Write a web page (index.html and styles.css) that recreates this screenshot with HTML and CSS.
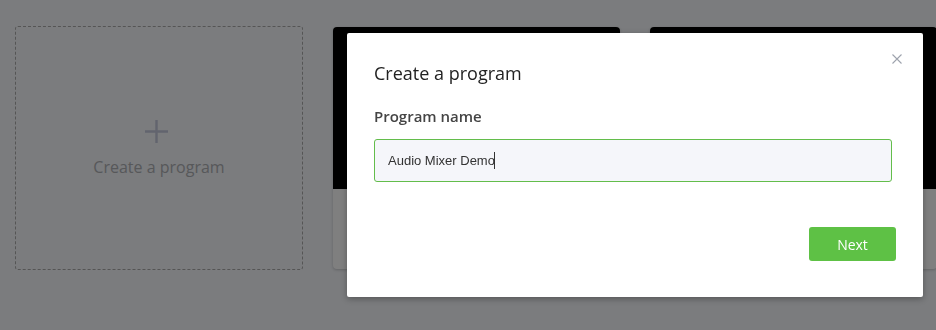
FILE: index.html
```html
<!DOCTYPE html>
<html lang="en">
<head>
  <meta charset="UTF-8">
  <title>Programs</title>
  <link rel="stylesheet" href="styles.css">
</head>
<body>
  <div class="programs">
    <div class="new-card">
      <svg class="plus" width="25" height="25" viewBox="0 0 25 25">
        <path d="M12.5 1v23M1 12.5h23" stroke="currentColor" stroke-width="2.4" fill="none"/>
      </svg>
      <div class="new-label">Create a program</div>
    </div>
    <div class="card">
      <div class="card-thumb"></div>
      <div class="card-body"></div>
    </div>
    <div class="card">
      <div class="card-thumb"></div>
      <div class="card-body"></div>
    </div>
  </div>

  <div class="overlay"></div>

  <div class="modal">
    <button class="close" aria-label="Close">
      <svg width="10" height="10" viewBox="0 0 10 10">
        <path d="M0.5 0.5l9 9M9.5 0.5l-9 9" stroke="currentColor" stroke-width="1.1" fill="none"/>
      </svg>
    </button>
    <h2>Create a program</h2>
    <label for="programName">Program name</label>
    <div class="field">
      <input type="text" id="programName" value="Audio Mixer Demo">
      <span class="caret"></span>
    </div>
    <div class="actions">
      <button class="next">Next</button>
    </div>
  </div>
</body>
</html>
```

FILE: styles.css
```css
body {
  margin: 0;
  font-family: 'Open Sans', sans-serif;
  background-color: #f6f8fc;
  color: #333;
  overflow: hidden;
  height: 330px;
}
.programs {
  display: flex;
  gap: 30px;
  padding: 26px 0 0 15px;
}
.new-card {
  flex: none;
  box-sizing: border-box;
  width: 288px;
  height: 244px;
  border: 1px dashed #aaa;
  border-radius: 3px;
  display: flex;
  flex-direction: column;
  align-items: center;
  justify-content: center;
}
.plus {
  color: #c4c8dc;
  margin: 0 6px 12px 0;
}
.new-label {
  font-size: 16px;
  line-height: 22px;
  color: #aeb0b5;
}
.card {
  flex: none;
  width: 287px;
  height: 242px;
  margin-top: 1px;
  background-color: #fff;
  border-radius: 4px;
  overflow: hidden;
  box-shadow: 0 1px 3px rgba(0, 0, 0, 0.2);
}
.card-thumb {
  height: 162px;
  background-color: #000;
}
.overlay {
  position: fixed;
  inset: 0;
  background-color: rgba(0, 0, 0, 0.5);
}
.modal {
  position: absolute;
  left: 347px;
  top: 33px;
  width: 576px;
  height: 264px;
  box-sizing: border-box;
  padding: 27px 27px 0 27px;
  background-color: #fff;
  border-radius: 2px;
  box-shadow: 0 2px 6px rgba(0, 0, 0, 0.3);
}
.modal h2 {
  margin: 0 0 20px;
  font-size: 18px;
  font-weight: 400;
  line-height: 26px;
  color: #222;
}
.close {
  position: absolute;
  top: 21px;
  right: 21px;
  padding: 0;
  border: none;
  background: none;
  color: #9ea3ad;
  line-height: 0;
  cursor: pointer;
}
.modal label {
  display: block;
  font-size: 15px;
  font-weight: 600;
  line-height: 20px;
  color: #444;
  margin-bottom: 13px;
}
.field {
  position: relative;
  margin-right: 4px;
}
.field input {
  display: block;
  box-sizing: border-box;
  width: 100%;
  height: 43px;
  padding: 0 13px;
  border: 1px solid #63bd4b;
  border-radius: 3px;
  background-color: #f5f6fa;
  font-family: 'Liberation Sans', Arial, sans-serif;
  font-size: 13px;
  color: #333;
  outline: none;
}
.caret {
  position: absolute;
  left: 120px;
  top: 13px;
  width: 1px;
  height: 17px;
  background-color: #333;
}
.actions {
  display: flex;
  justify-content: flex-end;
  margin-top: 45px;
}
.next {
  width: 87px;
  height: 34px;
  border: none;
  border-radius: 3px;
  background-color: #5ec145;
  color: #fff;
  font-family: 'Open Sans', sans-serif;
  font-size: 14px;
  cursor: pointer;
}
```
